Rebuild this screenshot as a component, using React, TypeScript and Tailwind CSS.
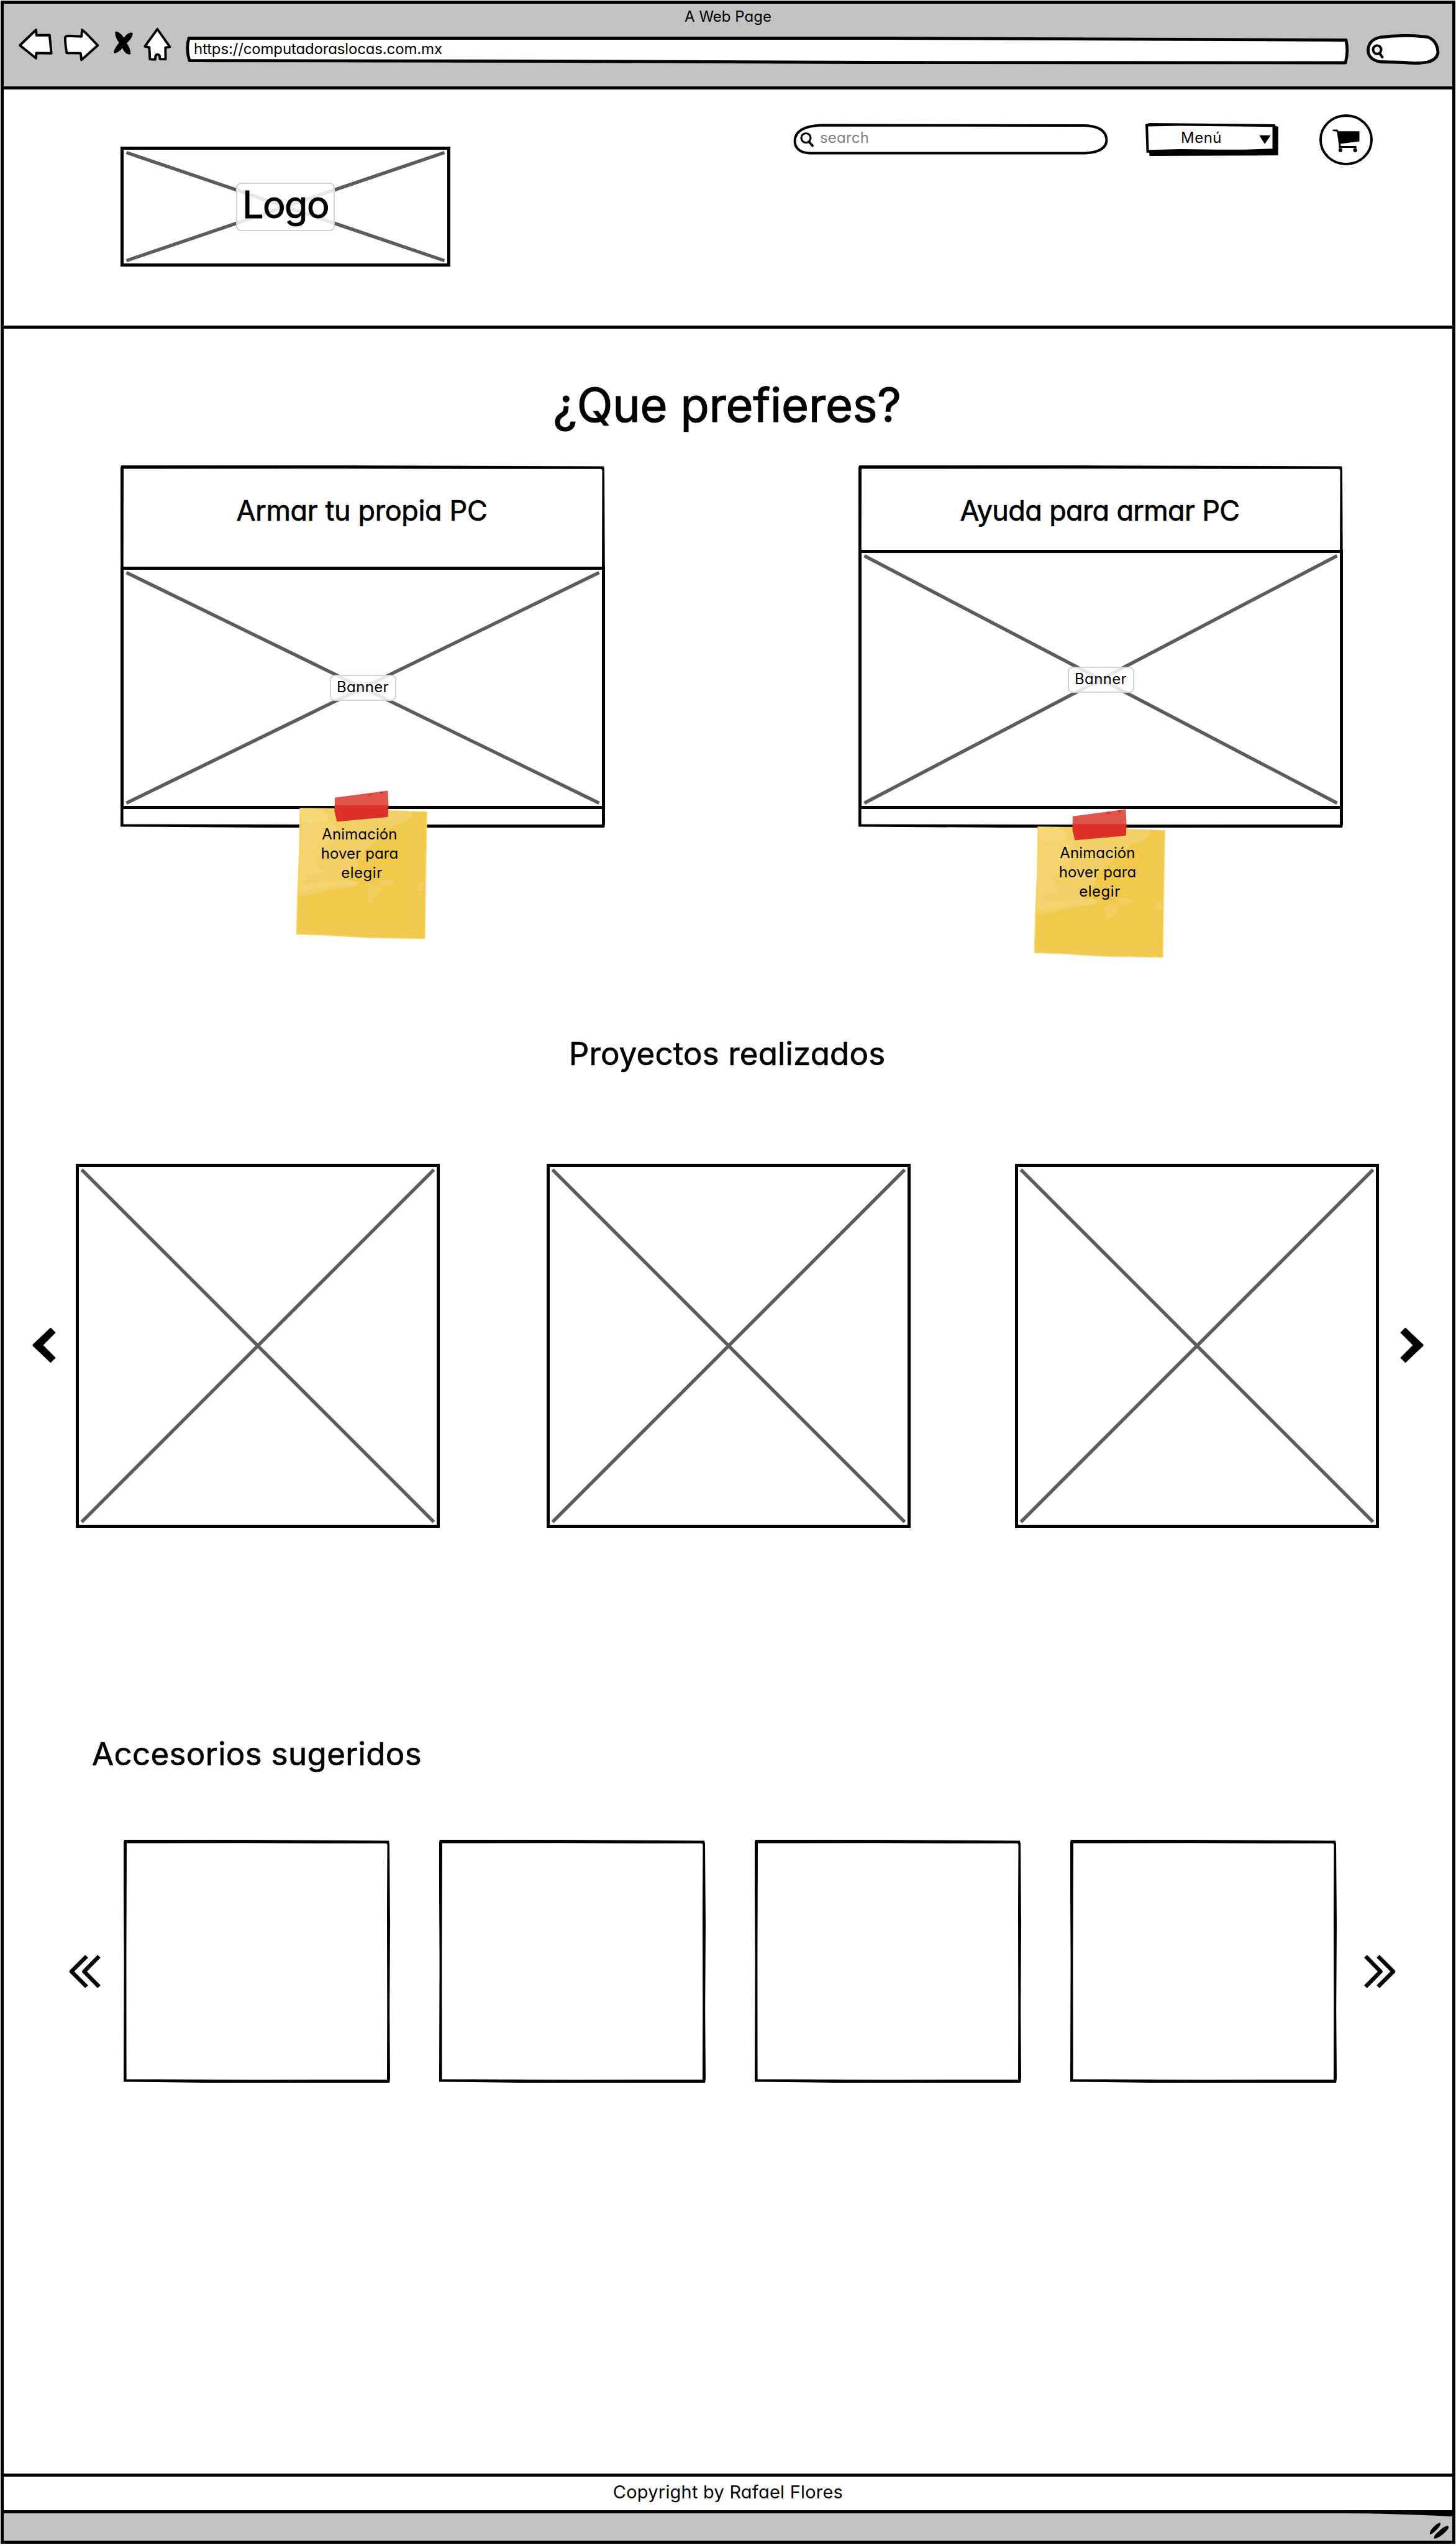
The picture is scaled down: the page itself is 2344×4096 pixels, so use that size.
import type { ReactNode } from "react";

/* Hand-drawn rectangle outline; the stroke swells and thins along each side. */
function SketchFrame({ w, h, t = 5 }: { w: number; h: number; t?: number }) {
  const outer = `M1 0 H${w * 0.45} L${w - 2} 1.5 L${w - 1} 6 L${w} ${h * 0.35} L${w - 0.8} ${h * 0.7} L${w} ${h - 6} L${w - 1} ${h} L${w * 0.6} ${h} L${w * 0.3} ${h} L0 ${h - 1.6} L0.6 ${h * 0.5} L0 ${h * 0.2} L0 4 Z`;
  const inner = `M${t} ${t + 0.6} L${t - 0.6} ${h * 0.5} L${t - 0.4} ${h - t - 0.6} L${w * 0.5} ${h - t + 0.2} L${w - t} ${h - t} L${w - t + 0.3} ${h * 0.7} L${w - t} ${h * 0.3} L${w - t + 0.5} ${t + 3} L${w - t - 1} ${t + 0.8} L${w * 0.8} ${t + 0.8} L${w * 0.45} ${t + 0.2} Z`;
  return (
    <svg className="absolute inset-0 size-full" viewBox={`0 0 ${w} ${h}`} preserveAspectRatio="none">
      <path d={outer + inner} fillRule="evenodd" />
    </svg>
  );
}

/* Image placeholder: outline, diagonal cross and an optional caption. */
function Placeholder({ w, h, className, children }: { w: number; h: number; className: string; children?: ReactNode }) {
  return (
    <div className={`relative flex items-center justify-center border-[5px] border-black bg-white ${className}`}>
      <svg className="absolute -inset-[5px]" width={w} height={h} viewBox={`0 0 ${w} ${h}`}>
        <path d={`M9.5 9.5 L${w - 9.5} ${h - 9.5} M${w - 9.5} 9.5 L9.5 ${h - 9.5}`} stroke="#5c5c5c" strokeWidth="5.5" fill="none" />
      </svg>
      {children}
    </div>
  );
}

function BannerTag() {
  return (
    <div className="relative flex h-[42px] w-[107px] justify-center rounded-[8px] border-2 border-[#d3d3d3] bg-white/85 pt-[6px]">
      <span className="text-[24px] leading-none tracking-[0.35px]">Banner</span>
    </div>
  );
}

function StickyNote({ className }: { className: string }) {
  return (
    <div className={`absolute h-[247px] w-[221px] ${className}`}>
      <svg className="absolute inset-0 size-full" viewBox="40 30 680 760" preserveAspectRatio="none">
        <path d="M72 123 L250 125 L705 141 L700 400 L694 773 L400 768 L180 755 L54 751 L58 580 L68 350 Z" fill="#f7da78" />
        <path d="M76 127 L250 129 L700 144 L694 400 L690 768 L400 763 L180 750 L60 746 L64 570 L72 350 Z" fill="#f1c94b" />
        <path d="M76 127 L628 141 L627 165 L606 188 L580 200 L540 208 L512 232 L470 236 L462 262 L440 300 L400 328 L370 352 L357 400 L352 425 L300 440 L290 478 L340 482 L368 492 L352 510 L250 524 L150 548 L90 560 L66 556 L70 400 Z" fill="#f3d065" />
        <path d="M76 127 L184 131 L215 165 L212 188 L195 200 L165 184 L120 205 L80 182 Z" fill="#f6d877" />
        <path d="M79 182 L120 205 L165 184 L195 203 L245 190 L250 230 L235 300 L200 345 L140 380 L186 440 L110 458 L90 492 L100 502 L290 481 L340 482 L368 492 L352 506 L250 508 L70 540 L72 350 Z" fill="#f5d470" />
        <path d="M430 504 L460 507 L480 528 L450 560 L430 588 L415 586 L407 560 L410 522 Z M462 482 L500 475 L535 486 L540 500 L515 510 L480 505 Z M686 486 L684 530 L665 538 L651 525 L660 502 Z" fill="#f3ce60" />
        <path d="M649 168 V768 M82 560 V740 M64 739 H649" stroke="#f3cf62" strokeWidth="2.5" fill="none" />
        <path d="M246 72 L509 38 L512 110 L509 168 L257 191 L245 140 Z" fill="#df554b" />
        <path d="M246 111 L512 111 L509 168 L257 191 L245 140 Z" fill="#dc2f27" />
        <path d="M411 57 Q418 50 432 53 Q430 63 414 63 Z M468 46 Q476 41 486 42 Q485 54 474 54 Z" fill="#dc2f27" />
        <path d="M262 112 V188 M494 112 V168" stroke="#e0473f" strokeWidth="1.5" fill="none" />
      </svg>
      <div className="relative flex flex-col items-center pt-[57px] text-center text-[24px] leading-[31px] tracking-[0.1px]">
        <span className="-ml-[7px]">Animación</span>
        <span className="-ml-[7px]">hover para</span>
        <span className="tracking-[0.5px]">elegir</span>
      </div>
    </div>
  );
}

function ChoiceCard({ title, note, tall }: { title: string; note: string; tall?: boolean }) {
  return (
    <div className="relative flex h-[583px] w-[780px] flex-col">
      <SketchFrame w={780} h={583} />
      <div className={tall ? "flex h-[136px] shrink-0 justify-center pt-[50px] pr-[3px]" : "flex h-[163px] shrink-0 justify-center pt-[50px] pr-[3px]"}>
        <h2 className={tall ? "text-[45px] leading-none tracking-[-0.65px] [-webkit-text-stroke:0.7px_black]" : "text-[45px] leading-none tracking-[-0.35px] [-webkit-text-stroke:0.7px_black]"}>{title}</h2>
      </div>
      {tall ? (
        <Placeholder w={780} h={417} className="h-[417px] w-[780px]"><BannerTag /></Placeholder>
      ) : (
        <Placeholder w={780} h={390} className="h-[390px] w-[780px]"><BannerTag /></Placeholder>
      )}
      <StickyNote className={note} />
    </div>
  );
}

function Chevron({ flip }: { flip?: boolean }) {
  return (
    <svg className={flip ? "h-[58px] w-[38px] rotate-180" : "h-[58px] w-[38px]"} viewBox="0 0 38 58">
      <path d="M29.5 0.5 L37.2 8.2 Q37.6 9 37 9.6 L17.6 29 L37 48.4 Q37.6 49 37.2 49.8 L29.5 57.5 L0.8 30.2 Q0 29 0.8 27.8 Z" />
    </svg>
  );
}

function DoubleChevron({ flip }: { flip?: boolean }) {
  return (
    <svg className={flip ? "h-[54px] w-[52px] rotate-180" : "h-[54px] w-[52px]"} viewBox="0 0 52 54">
      <path d="M28.5 2.5 L4 27 L28.5 51.5 M48.5 2.5 L24.5 27 L48.5 51.5" fill="none" stroke="#000" strokeWidth="6.5" strokeLinejoin="round" />
    </svg>
  );
}

function BrowserBar() {
  return (
    <div className="flex h-[138px] shrink-0 flex-col border-b-[5px] border-black bg-[#c2c2c2]">
      <div className="flex h-[32px] justify-center pt-[9px] text-[24px] leading-none">A Web Page</div>
      <div className="-mt-[3px] flex h-[78px] items-start pl-[23px]">
        <svg className="h-[78px] w-[57px]" viewBox="30 0 175 240">
          <path d="M39 117 L119 40 L121 67 L186 66 L195 156 L120 155 L119 181 Z" fill="#fff" stroke="#000" strokeWidth="12" strokeLinejoin="round" />
        </svg>
        <svg className="ml-[15px] h-[78px] w-[60px]" viewBox="250 0 185 240">
          <path d="M262 78 Q265 70 278 70 L343 73 L346 40 L365 56 L424 117 L343 189 L339 156 L270 155 Q262 112 262 78 Z" fill="#fff" stroke="#000" strokeWidth="12" strokeLinejoin="round" />
        </svg>
        <svg className="ml-[21px] h-[78px] w-[33px]" viewBox="500 0 102 240">
          <path d="M510 49 Q516 46 526 51 Q545 62 554 80 Q568 58 584 54 Q593 52 598 56 Q598 80 568 106 Q586 130 588 160 Q576 164 566 158 Q552 146 546 130 Q530 154 505 156 Q500 140 530 104 Q510 80 510 49 Z" />
        </svg>
        <svg className="ml-[15px] h-[78px] w-[46px]" viewBox="648 0 142 240">
          <path d="M720 36 L782 124 L760 128 L761 186 L733 185 L731 168 Q728 162 720 162 Q713 162 711 170 L709 187 L683 186 L680 127 L658 122 Z" fill="#fff" stroke="#000" strokeWidth="12" strokeLinejoin="round" />
        </svg>
        <div className="relative mt-[24px] ml-[23px] h-[45px] w-[1873px] pt-[8px] pl-[13px]">
          <svg className="absolute inset-0 size-full" viewBox="0 0 1873 45">
            <path d="M5 2.5 L1130 2.5 L1868 5.5 Q1872 24 1867 42 L1100 41.5 L600 39.5 L6 38.5 Q0 20 5 2.5 Z" fill="#fff" stroke="#000" strokeWidth="4.8" strokeLinejoin="round" />
          </svg>
          <span className="relative block text-[24px] leading-none tracking-[-0.15px]">https://computadoraslocas.com.mx</span>
        </div>
        <svg className="mt-[20px] ml-[28px] h-[50px] w-[118px]" viewBox="0 0 118 50">
          <path d="M22 5 Q60 0 98 4.5 Q114 10 115 30 Q113 41 98 45 Q80 48 60 45.5 L22 44.5 Q3 41 2.5 26 Q3 9 22 5 Z" fill="#fff" stroke="#000" strokeWidth="4.8" />
          <ellipse cx="17" cy="25" rx="6.5" ry="6.8" fill="none" stroke="#000" strokeWidth="4" />
          <path d="M21 31 L25.5 37" stroke="#000" strokeWidth="4" strokeLinecap="round" />
        </svg>
      </div>
    </div>
  );
}

function SiteHeader() {
  return (
    <header className="flex h-[385px] shrink-0 items-start border-b-[5px] border-black">
      <Placeholder w={531} h={193} className="mt-[92px] ml-[188px] h-[193px] w-[531px]">
        <div className="relative flex h-[78px] w-[159px] justify-center rounded-[8px] border-2 border-[#d3d3d3] bg-white/85 pt-[3px]">
          <span className="text-[61px] leading-none tracking-[-1.5px] [-webkit-text-stroke:1px_black]">Logo</span>
        </div>
      </Placeholder>
      <div className="relative mt-[55px] ml-[552px] flex h-[50px] w-[507px] pt-[11px] pl-[43px]">
        <svg className="absolute inset-0 size-full" viewBox="0 0 507 50">
          <path d="M46 2.5 L468 3 Q504 4 504.5 27 Q503 46 470 47.5 L26 47.5 Q3 46 2.5 28 Q3 4 46 2.5 Z" fill="#fff" stroke="#000" strokeWidth="4" />
          <ellipse cx="20.500" cy="23" rx="7.5" ry="7.5" fill="none" stroke="#000" strokeWidth="3.2" />
          <path d="M25.5 29.5 L31 35.5" stroke="#000" strokeWidth="3.8" strokeLinecap="round" />
        </svg>
        <span className="relative text-[24px] leading-none tracking-[0.2px] text-[#80808a]">search</span>
      </div>
      <div className="relative mt-[54px] ml-[60px] flex h-[53px] w-[214px] pt-[12px] pl-[57px]">
        <svg className="absolute inset-0 size-full" viewBox="28 78 656 162" preserveAspectRatio="none">
          <path d="M28 83 L50 78 L668 84 L669 92 L684 96 L683 237 L48 240 L47 224 L33 224 Z" />
          <path d="M41 95 L200 92 L655 97 L655 204 L520 209 L380 209 L200 206 L110 209 L45 210 Z" fill="#fff" />
          <path d="M590 138 L646 138 L617 181 Z" />
        </svg>
        <span className="relative text-[24px] leading-none tracking-[0.5px]">Menú</span>
      </div>
      <svg className="mt-[40px] ml-[66px] h-[82px] w-[86px]" viewBox="888 36 264 252" preserveAspectRatio="none">
        <ellipse cx="1020" cy="162" rx="126" ry="120" fill="none" stroke="#000" strokeWidth="12" />
        <path d="M956 111 L977 111 Q981 112 982 120 L1086 120 L1086 170 L992 182 L995 193 L1070 193 Q1074 198 1070 202 L988 202 Q981 198 985 192 L975 121 L956 119 Q949 115 956 111 Z" />
        <ellipse cx="992" cy="213" rx="9.5" ry="10.5" />
        <ellipse cx="1065" cy="213" rx="9.5" ry="10.5" />
      </svg>
    </header>
  );
}

export default function App() {
  return (
    <div className="flex h-[4096px] w-[2344px] flex-col bg-white px-px pt-px font-['Inter','Noto_Sans',sans-serif] text-black [font-feature-settings:'cv11'_1]">
      <div className="flex h-[4093px] w-[2342px] flex-col border-[5px] border-black">
        <BrowserBar />
        <SiteHeader />

        <main className="flex flex-1 flex-col">
          <section className="flex flex-col">
            <h1 className="mt-[85px] pr-[3px] text-center text-[75.5px] leading-none tracking-[-0.2px] [-webkit-text-stroke:1.2px_black]">¿Que prefieres?</h1>
            <div className="mt-[59.5px] flex pl-[188px]">
              <ChoiceCard title="Armar tu propia PC" note="top-[521px] left-[278px]" />
              <div className="w-[408px]" />
              <ChoiceCard title="Ayuda para armar PC" note="top-[551px] left-[278px]" tall />
            </div>
          </section>

          <section className="mt-[338px] flex flex-col">
            <h2 className="pr-[3px] text-center text-[51px] leading-none tracking-[0.15px] [-webkit-text-stroke:0.7px_black]">Proyectos realizados</h2>
            <div className="mt-[152px] flex items-center pl-[46px]">
              <div className="-mt-[3px] w-[70px]"><Chevron /></div>
              <Placeholder w={586} h={586} className="size-[586px]" />
              <Placeholder w={586} h={586} className="ml-[172px] size-[586px]" />
              <Placeholder w={586} h={586} className="ml-[168px] size-[586px]" />
              <div className="-mt-[3px] ml-[34px]"><Chevron flip /></div>
            </div>
          </section>

          <section className="mt-[338px] flex flex-col">
            <h2 className="pl-[142px] text-[51px] leading-none tracking-[0.35px] [-webkit-text-stroke:0.7px_black]">Accesorios sugeridos</h2>
            <div className="mt-[113px] flex items-center pl-[105px]">
              <div className="mt-[33px] w-[88px]"><DoubleChevron /></div>
              <div className="flex gap-[79px]">
                {[0, 1, 2, 3].map((n) => (
                  <div key={n} className="relative h-[391px] w-[429px]"><SketchFrame w={429} h={391} /></div>
                ))}
              </div>
              <div className="mt-[33px] ml-[43px]"><DoubleChevron flip /></div>
            </div>
          </section>
        </main>

        <footer className="flex h-[108px] shrink-0 flex-col">
          <div className="flex h-[59px] justify-center border-t-[5px] border-black pt-[10px]">
            <span className="text-[29px] leading-none tracking-[0.22px]">Copyright by Rafael Flores</span>
          </div>
          <div className="relative flex flex-1 justify-end border-t-[5px] border-black bg-[#c2c2c2]">
            <svg className="absolute top-0 right-0 h-[5px] w-[170px]" viewBox="0 0 170 5" preserveAspectRatio="none">
              <path d="M0 0 H170 V5 Q80 0.5 0 0 Z" />
            </svg>
            <svg className="mt-[14px] mr-[5px] h-[28px] w-[32px]" viewBox="0 0 32 28">
              <path d="M17 1 Q20 3 15 9 Q7 18 2 20 Q-1 17 4 11 Q12 2 17 1 Z M30 6 Q33 9 27 15 Q16 26 8 27 Q6 23 13 17 Q24 6 30 6 Z" />
            </svg>
          </div>
        </footer>
      </div>
    </div>
  );
}
